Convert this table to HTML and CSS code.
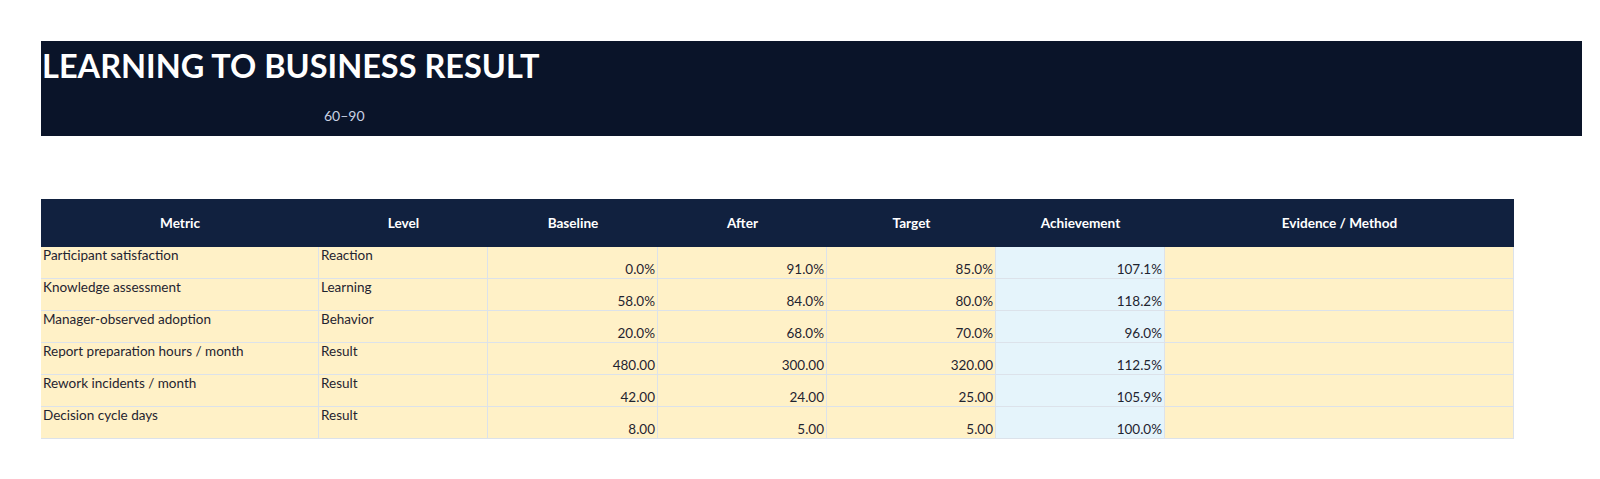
FILE: index.html
```html
<!DOCTYPE html>
<html>
<head>
<meta charset="utf-8">
<link rel="stylesheet" href="styles.css">
</head>
<body>
<div class="page">
  <div class="banner">
    <div class="title-row">LEARNING TO BUSINESS RESULT</div>
    <div class="sub-row"><span class="sub-a"></span><span class="sub-b">60–90</span></div>
  </div>
  <div class="sheet">
    <div class="hd">Metric</div>
    <div class="hd">Level</div>
    <div class="hd">Baseline</div>
    <div class="hd">After</div>
    <div class="hd">Target</div>
    <div class="hd">Achievement</div>
    <div class="hd">Evidence / Method</div>

    <div class="c t">Participant satisfaction</div>
    <div class="c t">Reaction</div>
    <div class="c n">0.0%</div>
    <div class="c n">91.0%</div>
    <div class="c n">85.0%</div>
    <div class="c n ach">107.1%</div>
    <div class="c"></div>

    <div class="c t">Knowledge assessment</div>
    <div class="c t">Learning</div>
    <div class="c n">58.0%</div>
    <div class="c n">84.0%</div>
    <div class="c n">80.0%</div>
    <div class="c n ach">118.2%</div>
    <div class="c"></div>

    <div class="c t">Manager-observed adoption</div>
    <div class="c t">Behavior</div>
    <div class="c n">20.0%</div>
    <div class="c n">68.0%</div>
    <div class="c n">70.0%</div>
    <div class="c n ach">96.0%</div>
    <div class="c"></div>

    <div class="c t">Report preparation hours / month</div>
    <div class="c t">Result</div>
    <div class="c n">480.00</div>
    <div class="c n">300.00</div>
    <div class="c n">320.00</div>
    <div class="c n ach">112.5%</div>
    <div class="c"></div>

    <div class="c t">Rework incidents / month</div>
    <div class="c t">Result</div>
    <div class="c n">42.00</div>
    <div class="c n">24.00</div>
    <div class="c n">25.00</div>
    <div class="c n ach">105.9%</div>
    <div class="c"></div>

    <div class="c t">Decision cycle days</div>
    <div class="c t">Result</div>
    <div class="c n">8.00</div>
    <div class="c n">5.00</div>
    <div class="c n">5.00</div>
    <div class="c n ach">100.0%</div>
    <div class="c"></div>
  </div>
</div>
</body>
</html>
```

FILE: styles.css
```css
html, body {
  margin: 0;
  padding: 0;
  background: #ffffff;
}
body {
  font-family: Lato, "Liberation Sans", sans-serif;
  color: #1f2430;
}
.page {
  padding: 41px 18px 0 41px;
}
.banner {
  width: 1541px;
  height: 95px;
  background: #0a1429;
  display: flex;
  flex-direction: column;
}
.title-row {
  height: 48px;
  display: flex;
  align-items: center;
  padding-left: 1px;
  color: #ffffff;
  font-weight: 700;
  font-size: 32.5px;
  white-space: nowrap;
}
.sub-row {
  flex: 1;
  display: flex;
  align-items: flex-end;
  padding-bottom: 12px;
}
.sub-a {
  width: 278px;
}
.sub-b {
  padding-left: 5px;
  color: #c9d1e2;
  font-size: 14px;
}
.sheet {
  margin-top: 63px;
  display: grid;
  grid-template-columns: 278px 169px 170px 169px 169px 169px 349px;
  grid-template-rows: 48px repeat(6, 32px);
  width: 1473px;
}
.hd {
  background: #11213f;
  color: #ffffff;
  font-weight: 700;
  font-size: 13.6px;
  display: flex;
  align-items: center;
  justify-content: center;
}
.c {
  background: #fff1c7;
  border-right: 1px solid #dce2ea;
  border-bottom: 1px solid #dce2ea;
  font-size: 13.5px;
  box-sizing: border-box;
  display: flex;
  white-space: nowrap;
}
.t {
  align-items: flex-start;
  padding: 0 2px;
  line-height: 16px;
}
.n {
  align-items: flex-end;
  justify-content: flex-end;
  padding: 0 2px 1px 2px;
  line-height: 16px;
}
.ach {
  background: #e5f4fb;
}
```
